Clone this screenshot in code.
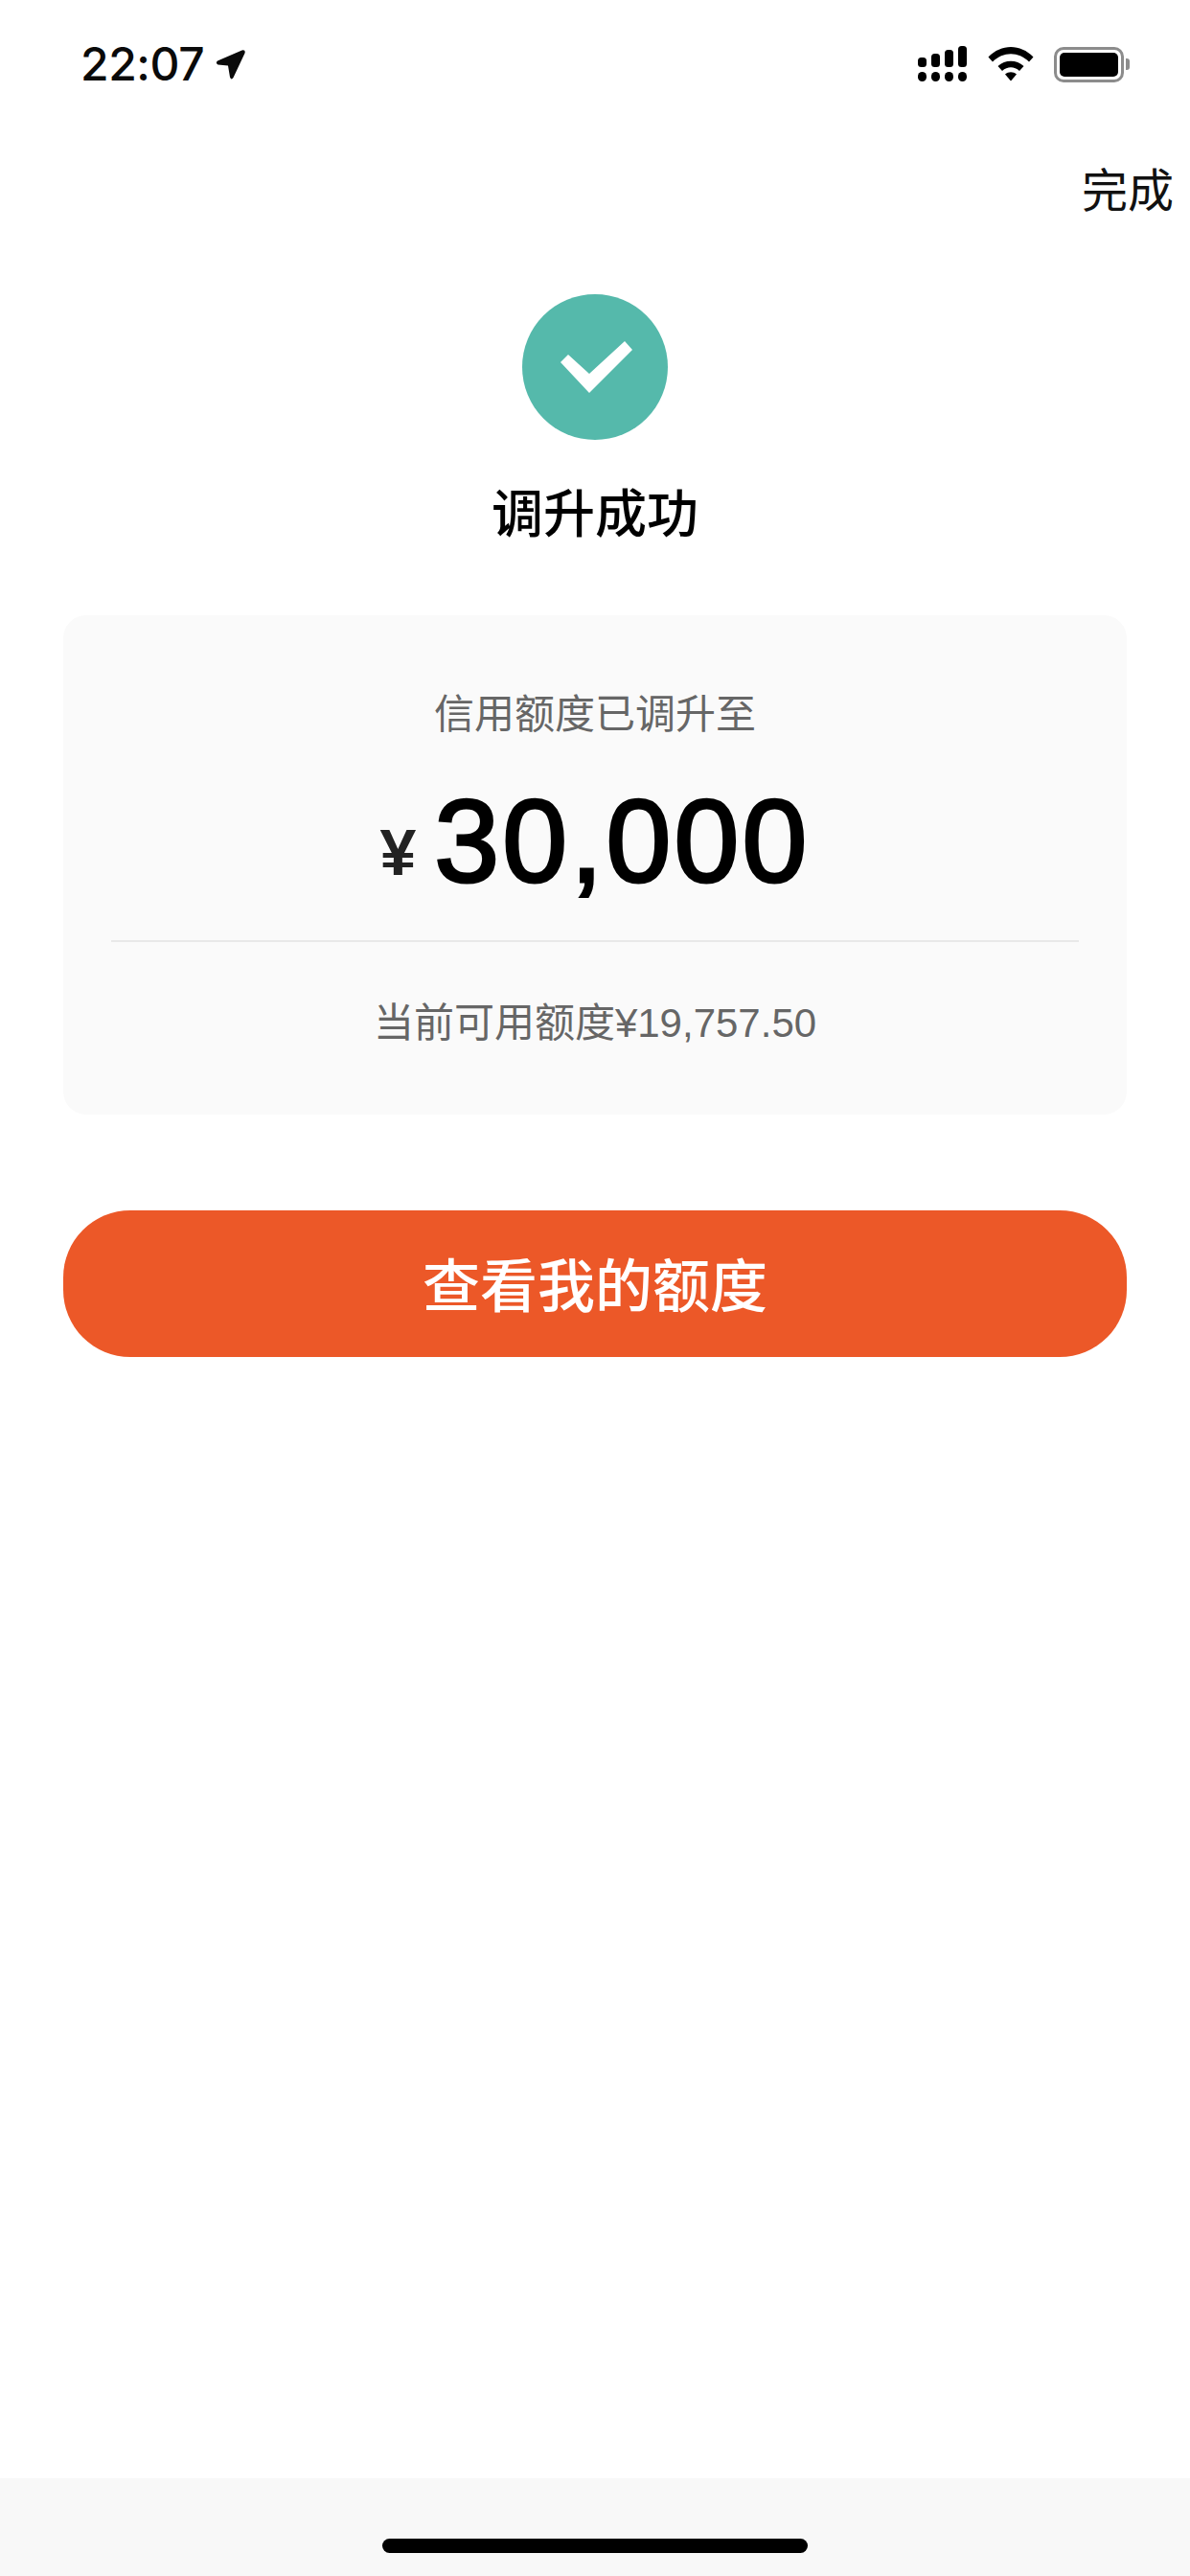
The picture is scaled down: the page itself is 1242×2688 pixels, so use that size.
<div class="page">
	<header class="status">
		<div class="clock">
			<span class="time">22:07</span>
			<svg class="arrow" width="33" height="32" viewBox="0 0 32 32">
				<path d="M2.5 12.5 L28 1.5 Q32 0.5 31 4.5 L19 30 Q17 33 15.5 29.5 L13.5 17.5 L3 16.5 Q0 15 2.5 12.5 Z" fill="#0a0a0a" />
			</svg>
		</div>
		<div class="indicators">
			<svg width="52" height="38" viewBox="0 0 52 38">
				<rect x="0" y="12" width="9" height="10" rx="3.5" />
				<rect x="14" y="8" width="9" height="14" rx="3.5" />
				<rect x="28" y="4" width="9" height="18" rx="3.5" />
				<rect x="42" y="0" width="9" height="22" rx="3.5" />
				<rect x="0" y="27" width="9" height="10" rx="4.5" />
				<rect x="14" y="27" width="9" height="10" rx="4.5" />
				<rect x="28" y="27" width="9" height="10" rx="4.5" />
				<rect x="42" y="27" width="9" height="10" rx="4.5" />
			</svg>
			<svg class="wifi" width="48" height="38" viewBox="0 0 48 38">
				<path d="M0.5 11.5 C14 -2.5 34 -2.5 47.5 11.5 L43 16.5 C32 5.5 16 5.5 5 16.5 Z" />
				<path d="M10.5 21 C18 14 30 14 37.5 21 L33 26 C27.500 21 20.500 21 15 26 Z" />
				<path d="M18 29.500 C21.500 26.500 26.500 26.500 30 29.500 L24 36.500 Z" />
			</svg>
			<div class="battery">
				<div class="cell"><div class="charge"></div></div>
				<div class="nub"></div>
			</div>
		</div>
	</header>

	<nav class="nav"><span class="done">完成</span></nav>

	<main class="content">
		<div class="badge">
			<svg width="152" height="152" viewBox="0 0 152 152">
				<circle cx="76" cy="76" r="76" fill="#55b9ab" />
				<polygon points="40,71 48,63 70,83 107,49 115,58 70,103" fill="#fff" />
			</svg>
		</div>
		<h1 class="title">调升成功</h1>

		<section class="card">
			<p class="label">信用额度已调升至</p>
			<div class="amount">
				<span class="yen">¥</span>
				<span class="value">30,000</span>
			</div>
			<div class="divider"></div>
			<p class="available">当前可用额度¥19,757.50</p>
		</section>

		<button class="cta">查看我的额度</button>
	</main>

	<footer class="footer"><div class="home"></div></footer>
</div>

<style>
	:global(body) {
		margin: 0;
		background: #fff;
	}

	.page {
		width: 1242px;
		height: 2688px;
		display: flex;
		flex-direction: column;
		background: #fff;
		font-family: 'Liberation Sans', 'Noto Sans CJK SC', sans-serif;
		color: #000;
	}

	.status {
		height: 132px;
		flex: none;
		box-sizing: border-box;
		padding: 48px 63px 0 84px;
		display: flex;
		justify-content: space-between;
		align-items: flex-start;
	}

	.clock {
		display: flex;
		align-items: center;
		gap: 11px;
		height: 38px;
	}

	.time {
		font-family: Inter, 'Liberation Sans', sans-serif;
		font-size: 48px;
		font-weight: 550;
		line-height: 38px;
		letter-spacing: -0.4px;
		color: #0a0a0a;
	}

	.indicators {
		display: flex;
		align-items: center;
		gap: 21px;
		height: 38px;
	}

	.indicators svg {
		fill: #000;
		display: block;
	}

	.battery {
		display: flex;
		align-items: center;
		gap: 2px;
	}

	.cell {
		box-sizing: border-box;
		width: 73px;
		height: 37px;
		padding: 3px;
		border: 3px solid #8c8c8c;
		border-radius: 10px;
	}

	.charge {
		width: 100%;
		height: 100%;
		background: #000;
		border-radius: 5px;
	}

	.nub {
		width: 4px;
		height: 12px;
		background: #8c8c8c;
		border-radius: 0 3px 3px 0;
	}

	.nav {
		flex: none;
		height: 175px;
		box-sizing: border-box;
		padding: 38px 17px 0 0;
		display: flex;
		justify-content: flex-end;
		align-items: flex-start;
	}

	.done {
		font-size: 48px;
		line-height: 60px;
		color: #111;
	}

	.content {
		flex: 1;
		padding: 0 66px;
		display: flex;
		flex-direction: column;
		align-items: center;
	}

	.badge {
		height: 152px;
	}

	.badge svg {
		display: block;
	}

	.title {
		margin: 47px 0 0;
		font-size: 54px;
		line-height: 62px;
		font-weight: 500;
		color: #000;
	}

	.card {
		align-self: stretch;
		margin-top: 74px;
		height: 521px;
		box-sizing: border-box;
		padding: 76px 50px 0;
		background: #fafafa;
		border-radius: 24px;
		display: flex;
		flex-direction: column;
		align-items: center;
	}

	.label,
	.available {
		margin: 0;
		font-size: 42px;
		line-height: 56px;
		color: #666;
	}

	.amount {
		display: flex;
		align-items: baseline;
		gap: 19px;
		margin-top: 29px;
		height: 150px;
	}

	.yen {
		font-size: 68px;
		font-weight: 700;
		color: #222;
		transform: translateY(-7px);
	}

	.value {
		font-size: 122px;
		line-height: 150px;
		letter-spacing: 3.2px;
		-webkit-text-stroke: 3px #000;
		color: #000;
	}

	.divider {
		align-self: stretch;
		height: 2px;
		margin-top: 28px;
		background: #e8e8e8;
	}

	.available {
		margin-top: 57px;
	}

	.cta {
		align-self: stretch;
		margin-top: 100px;
		height: 153px;
		border: 0;
		padding: 0 0 5px;
		border-radius: 70px;
		background: #ec5828;
		color: #fff;
		font-family: inherit;
		font-size: 60px;
		font-weight: 500;
	}

	.footer {
		flex: none;
		height: 102px;
		background: #f8f8f8;
		display: flex;
		justify-content: center;
		box-sizing: border-box;
		padding-top: 63px;
	}

	.home {
		width: 444px;
		height: 15px;
		background: #000;
		border-radius: 8px;
	}
</style>
